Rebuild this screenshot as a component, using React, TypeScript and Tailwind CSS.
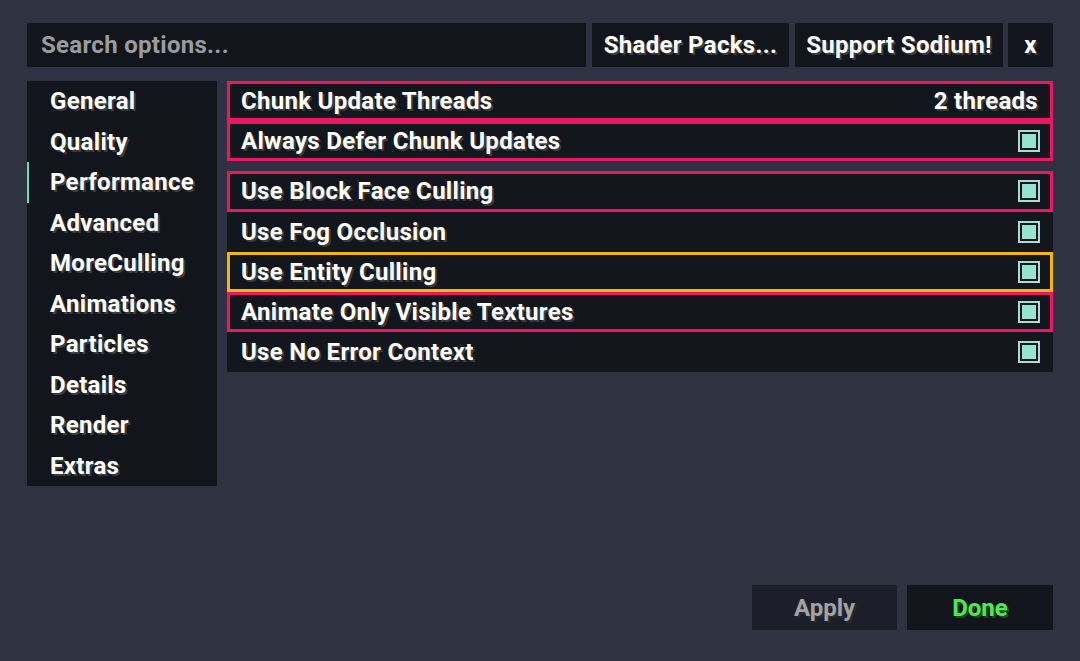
import React from "react";

type Option = {
  label: string;
  value?: string;
  highlight?: "pink" | "yellow";
};

const CATEGORIES = [
  "General",
  "Quality",
  "Performance",
  "Advanced",
  "MoreCulling",
  "Animations",
  "Particles",
  "Details",
  "Render",
  "Extras",
];

const GROUPS: Option[][] = [
  [
    { label: "Chunk Update Threads", value: "2 threads", highlight: "pink" },
    { label: "Always Defer Chunk Updates", highlight: "pink" },
  ],
  [
    { label: "Use Block Face Culling", highlight: "pink" },
    { label: "Use Fog Occlusion" },
    { label: "Use Entity Culling", highlight: "yellow" },
    { label: "Animate Only Visible Textures", highlight: "pink" },
    { label: "Use No Error Context" },
  ],
];

const text = "text-[24px] font-bold tracking-[0.3px] text-white [text-shadow:2px_2px_0_#3c3c3c]";

function Checkbox() {
  return (
    <div className="w-[22px] h-[22px] border-2 border-[#a8ddd0] p-[2px]">
      <div className="w-full h-full bg-[#95e3d0]" />
    </div>
  );
}

function OptionRow({ opt }: { opt: Option }) {
  const border =
    opt.highlight === "pink"
      ? "border-[#ec1663]"
      : opt.highlight === "yellow"
        ? "border-[#f2b705]"
        : "border-transparent";
  return (
    <div
      className={`h-[40.2px] flex items-center justify-between pl-[11px] pr-[10px] bg-[#14161d] border-[3px] ${border}`}
    >
      <span className={text}>{opt.label}</span>
      {opt.value ? <span className={`${text} pr-[2px]`}>{opt.value}</span> : <Checkbox />}
    </div>
  );
}

export default function App() {
  return (
    <div
      className="w-full h-[661px] bg-[#2f3341] flex flex-col px-[27px] pt-[23px] pb-[31px] overflow-hidden"
      style={{ fontFamily: "Roboto, 'Noto Sans', sans-serif" }}
    >
      <div className="flex h-[44px] gap-[6px]">
        <div className="flex-1 bg-[#13151c] flex items-center px-[14px]">
          <span className="text-[24px] font-bold tracking-[0.3px] text-[#9b9ca0]">Search options...</span>
        </div>
        <button className="w-[197px] bg-[#13151c] flex items-center justify-center">
          <span className={text}>Shader Packs...</span>
        </button>
        <button className="w-[208px] bg-[#13151c] flex items-center justify-center">
          <span className={text}>Support Sodium!</span>
        </button>
        <button className="w-[45px] -ml-[1px] bg-[#13151c] flex items-center justify-center">
          <span className={text}>x</span>
        </button>
      </div>

      <div className="flex gap-[10px] mt-[14px] items-start">
        <nav className="w-[190px] bg-[#13151c] flex flex-col">
          {CATEGORIES.map((c) =>
            c === "Performance" ? (
              <div key={c} className="h-[40.5px] flex items-center pl-[21px] border-l-2 border-[#73d6c2]">
                <span className={text}>{c}</span>
              </div>
            ) : (
              <div key={c} className="h-[40.5px] flex items-center pl-[23px]">
                <span className={text}>{c}</span>
              </div>
            ),
          )}
        </nav>

        <div className="flex-1 flex flex-col gap-[10px]">
          {GROUPS.map((g, i) => (
            <div key={i} className="flex flex-col">
              {g.map((opt) => (
                <OptionRow key={opt.label} opt={opt} />
              ))}
            </div>
          ))}
        </div>
      </div>

      <div className="flex-1" />

      <div className="flex justify-end gap-[10px]">
        <button className="w-[145px] h-[45px] bg-[#1c1f2a] flex items-center justify-center">
          <span className="text-[24px] font-bold text-[#a3a3a6] [text-shadow:2px_2px_0_#2a2a2a]">Apply</span>
        </button>
        <button className="w-[146px] h-[45px] bg-[#13151c] flex items-center justify-center">
          <span className="text-[24px] font-bold text-[#55e655] [text-shadow:2px_2px_0_#1d4a1d]">Done</span>
        </button>
      </div>
    </div>
  );
}
